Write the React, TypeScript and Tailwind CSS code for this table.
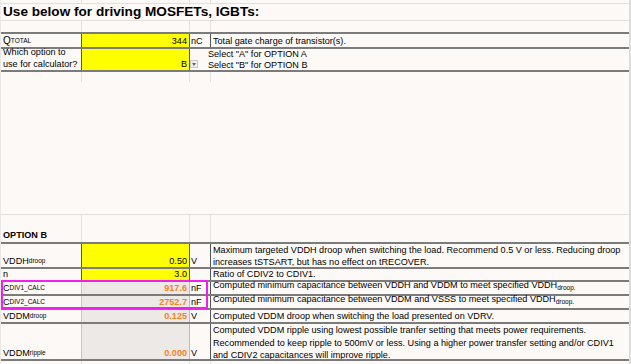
import React from "react";

function Sub({ children }: { children: React.ReactNode }) {
  return <span className="text-[6.5px] align-[-2px]">{children}</span>;
}

function Dark() {
  return <div className="h-[2px] w-full bg-[#7b7b7b]" />;
}

function Light() {
  return <div className="h-px w-full bg-[#e3dfdc]" />;
}

function LightCells({ h }: { h: string }) {
  return (
    <div className={`flex ${h}`}>
      <div className="w-[81px] border-r border-[#e3dfdc]" />
      <div className="w-[108px] border-r border-[#e3dfdc]" />
      <div className="w-[21px] border-r border-[#e3dfdc]" />
      <div className="flex-1" />
    </div>
  );
}

export default function App() {
  return (
    <div className="relative h-[364px] w-[631px] overflow-hidden bg-[#fdf9f6] font-['Liberation_Sans',Arial,sans-serif] text-[9.1px] text-black">
      <div className="flex h-full w-[629px] flex-col border-l border-[#ebe7e4]">
        {/* top rows */}
        <LightCells h="h-[3px]" />
        <Light />
        <div className="flex h-[16px] items-center pl-[2px] text-[13.6px] font-bold leading-none">
          Use below for driving MOSFETs, IGBTs:
        </div>
        <Light />
        <LightCells h="h-[11px]" />
        <Dark />
        {/* Q row */}
        <div className="flex h-[13px]">
          <div className="flex w-[81px] items-end border-r border-[#555] pl-[2px] leading-[12px]">
            <span className="text-[10px]">Q</span>
            <Sub>TOTAL</Sub>
          </div>
          <div className="flex w-[108px] items-end justify-end border-r border-[#555] bg-[#ffff00] pr-[2px] leading-[12px]">
            344
          </div>
          <div className="flex w-[21px] items-end border-r border-[#555] pl-[1px] leading-[12px]">nC</div>
          <div className="flex flex-1 items-end pl-[2px] leading-[12px]">Total gate charge of transistor(s).</div>
        </div>
        <Dark />
        {/* option row */}
        <div className="flex h-[21px]">
          <div className="flex w-[81px] flex-col justify-end border-r border-[#555] pl-[2px] leading-[11.5px]">
            <span>Which option to</span>
            <span>use for calculator?</span>
          </div>
          <div className="flex w-[108px] items-end justify-end border-r border-[#555] bg-[#ffff00] pr-[2px] leading-[12px]">
            B
          </div>
          <div className="flex w-[21px] items-end pb-[2px]">
            <div className="flex h-[8px] w-[8px] items-center justify-center border border-[#c9c9c9] bg-[#efefef]">
              <div className="h-0 w-0 border-x-[2.5px] border-t-[3px] border-x-transparent border-t-[#6a6a6a]" />
            </div>
          </div>
          <div className="-ml-[3px] flex flex-1 flex-col justify-center leading-[11px]">
            <span>Select "A" for OPTION A</span>
            <span>Select "B" for OPTION B</span>
          </div>
        </div>
        <Dark />
        <LightCells h="h-[10px]" />
        <div className="h-[132px]" />
        <Light />
        {/* OPTION B row */}
        <div className="flex h-[27px]">
          <div className="flex w-[81px] items-end border-r border-[#e3dfdc] pb-[1px] pl-[2px] font-bold leading-[12px]">
            OPTION B
          </div>
          <div className="w-[108px] border-r border-[#e3dfdc]" />
          <div className="w-[21px] border-r border-[#e3dfdc]" />
          <div className="flex-1" />
        </div>
        <Dark />
        {/* VDDH droop */}
        <div className="flex h-[23px]">
          <div className="flex w-[81px] items-end border-r border-[#555] pl-[2px] leading-[12px]">
            <span>VDDH</span>
            <Sub>droop</Sub>
          </div>
          <div className="flex w-[108px] items-end justify-end border-r border-[#555] bg-[#ffff00] pr-[2px] leading-[12px]">
            0.50
          </div>
          <div className="flex w-[21px] items-end border-r border-[#555] pl-[1px] leading-[12px]">V</div>
          <div className="flex flex-1 flex-col justify-center pl-[2px] leading-[12px]">
            <span>Maximum targeted VDDH droop when switching the load. Recommend 0.5 V or less. Reducing droop</span>
            <span>increases tSTSART, but has no effect on tRECOVER.</span>
          </div>
        </div>
        <Dark />
        {/* n */}
        <div className="flex h-[11px]">
          <div className="flex w-[81px] items-end border-r border-[#555] pl-[2px] leading-[11px]">n</div>
          <div className="flex w-[108px] items-end justify-end border-r border-[#555] bg-[#ffff00] pr-[2px] leading-[11px]">
            3.0
          </div>
          <div className="w-[21px] border-r border-[#555]" />
          <div className="flex flex-1 items-end pl-[2px] leading-[11px]">Ratio of CDIV2 to CDIV1.</div>
        </div>
        <Dark />
        {/* CDIV1 */}
        <div className="flex h-[12px]">
          <div className="flex w-[81px] items-end border-r border-[#c9c6c3] pl-[2px] leading-[12px]">
            <span>C</span>
            <Sub>DIV1_CALC</Sub>
          </div>
          <div className="flex w-[108px] items-end justify-end border-r border-[#bdbab7] bg-[#ece9e7] pr-[2px] font-bold leading-[12px] text-[#f5821f]">
            917.6
          </div>
          <div className="flex w-[21px] items-end border-r border-[#555] pl-[1px] leading-[12px]">nF</div>
          <div className="flex flex-1 items-end pl-[2px] leading-[12px]">
            <span>
              Computed minimum capacitance between VDDH and VDDM to meet specified VDDH<Sub>droop.</Sub>
            </span>
          </div>
        </div>
        <Dark />
        {/* CDIV2 */}
        <div className="flex h-[12px]">
          <div className="flex w-[81px] items-end border-r border-[#c9c6c3] pl-[2px] leading-[12px]">
            <span>C</span>
            <Sub>DIV2_CALC</Sub>
          </div>
          <div className="flex w-[108px] items-end justify-end border-r border-[#bdbab7] bg-[#ece9e7] pr-[2px] font-bold leading-[12px] text-[#f5821f]">
            2752.7
          </div>
          <div className="flex w-[21px] items-end border-r border-[#555] pl-[1px] leading-[12px]">nF</div>
          <div className="flex flex-1 items-end pl-[2px] leading-[12px]">
            <span>
              Computed minimum capacitance between VDDM and VSSS to meet specified VDDH<Sub>droop.</Sub>
            </span>
          </div>
        </div>
        <Dark />
        {/* VDDM droop */}
        <div className="flex h-[12px]">
          <div className="flex w-[81px] items-end border-r border-[#c9c6c3] pl-[2px] leading-[12px]">
            <span>VDDM</span>
            <Sub>droop</Sub>
          </div>
          <div className="flex w-[108px] items-end justify-end border-r border-[#bdbab7] bg-[#ece9e7] pr-[2px] font-bold leading-[12px] text-[#f5821f]">
            0.125
          </div>
          <div className="flex w-[21px] items-end border-r border-[#555] pl-[1px] leading-[12px]">V</div>
          <div className="flex flex-1 items-end pl-[2px] leading-[12px]">
            Computed VDDM droop when switching the load presented on VDRV.
          </div>
        </div>
        <Dark />
        {/* VDDM ripple */}
        <div className="flex h-[35px]">
          <div className="flex w-[81px] items-end border-r border-[#c9c6c3] pl-[2px] leading-[12px]">
            <span>VDDM</span>
            <Sub>ripple</Sub>
          </div>
          <div className="flex w-[108px] items-end justify-end border-r border-[#bdbab7] bg-[#ece9e7] pr-[2px] font-bold leading-[12px] text-[#f5821f]">
            0.000
          </div>
          <div className="flex w-[21px] items-end border-r border-[#555] pl-[1px] leading-[12px]">V</div>
          <div className="flex flex-1 flex-col justify-start pl-[2px] leading-[12.5px]">
            <span>Computed VDDM ripple using lowest possible tranfer setting that meets power requirements.</span>
            <span>Recommended to keep ripple to 500mV or less. Using a higher power transfer setting and/or CDIV1</span>
            <span>and CDIV2 capacitances will improve ripple.</span>
          </div>
        </div>
        <Dark />
        <LightCells h="h-[3px]" />
      </div>
      {/* right edge */}
      <div className="absolute right-0 top-0 h-full w-[2px] bg-[#dcdcdc]" />
      {/* magenta highlight box */}
      <div className="absolute left-[1px] top-[280px] h-[29px] w-[207px] border-2 border-[#f01ef0]" />
    </div>
  );
}
